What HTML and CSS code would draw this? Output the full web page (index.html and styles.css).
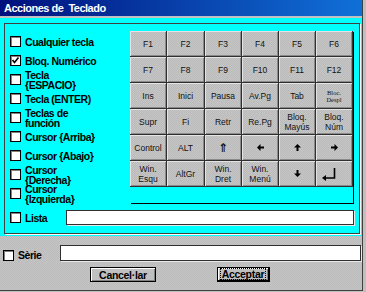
FILE: index.html
```html
<!DOCTYPE html>
<html lang="ca">
  <head>
    <meta charset="UTF-8" />
    <title>Acciones de Teclado</title>
    <link rel="stylesheet" href="styles.css">
  </head>
  <body>
    <div class="window">
      <!-- barra de títol -->
      <div class="titlebar">Acciones de&nbsp; Teclado</div>

      <!-- panell cian -->
      <div class="panel">
        <div class="group">
          <div class="top">
            <div class="checks">
              <div class="check-row"><span class="box"></span><span class="label">Cualquier tecla</span></div>
              <div class="check-row">
                <span class="box">
                  <svg width="9" height="9" viewBox="0 0 9 9"><path d="M1.5 4 L3.5 6.5 L7.5 1.5" fill="none" stroke="#000" stroke-width="1.6"/></svg>
                </span>
                <span class="label">Bloq. Numérico</span>
              </div>
              <div class="check-row"><span class="box"></span><span class="label">Tecla<br>{ESPACIO}</span></div>
              <div class="check-row"><span class="box"></span><span class="label">Tecla (ENTER)</span></div>
              <div class="check-row"><span class="box"></span><span class="label">Teclas de<br>función</span></div>
              <div class="check-row"><span class="box"></span><span class="label">Cursor {Arriba}</span></div>
              <div class="check-row"><span class="box"></span><span class="label">Cursor {Abajo}</span></div>
              <div class="check-row"><span class="box"></span><span class="label">Cursor<br>{Derecha}</span></div>
              <div class="check-row"><span class="box"></span><span class="label">Cursor<br>{Izquierda}</span></div>
            </div>

            <div class="keys">
              <div class="key">F1</div>
              <div class="key">F2</div>
              <div class="key">F3</div>
              <div class="key">F4</div>
              <div class="key">F5</div>
              <div class="key">F6</div>

              <div class="key">F7</div>
              <div class="key">F8</div>
              <div class="key">F9</div>
              <div class="key">F10</div>
              <div class="key">F11</div>
              <div class="key">F12</div>

              <div class="key">Ins</div>
              <div class="key">Inici</div>
              <div class="key">Pausa</div>
              <div class="key">Av.Pg</div>
              <div class="key">Tab</div>
              <div class="key tiny">Bloc.<br>Despl</div>

              <div class="key">Supr</div>
              <div class="key">Fi</div>
              <div class="key">Retr</div>
              <div class="key">Re.Pg</div>
              <div class="key">Bloq.<br>Mayús</div>
              <div class="key">Bloq.<br>Núm</div>

              <div class="key">Control</div>
              <div class="key">ALT</div>
              <div class="key shift">⇑</div>
              <div class="key">
                <svg width="7" height="7" viewBox="0 0 7 7"><path d="M0 3.5 L3.5 0 L3.5 2.5 L7 2.5 L7 4.5 L3.5 4.5 L3.5 7 Z"/></svg>
              </div>
              <div class="key">
                <svg width="7" height="7" viewBox="0 0 7 7"><path d="M3.5 0 L7 3.5 L4.5 3.5 L4.5 7 L2.5 7 L2.5 3.5 L0 3.5 Z"/></svg>
              </div>
              <div class="key">
                <svg width="7" height="7" viewBox="0 0 7 7"><path d="M7 3.5 L3.5 0 L3.5 2.5 L0 2.5 L0 4.5 L3.5 4.5 L3.5 7 Z"/></svg>
              </div>

              <div class="key">Win.<br>Esqu</div>
              <div class="key">AltGr</div>
              <div class="key">Win.<br>Dret</div>
              <div class="key">Win.<br>Menú</div>
              <div class="key">
                <svg width="7" height="7" viewBox="0 0 7 7"><path d="M3.5 7 L7 3.5 L4.5 3.5 L4.5 0 L2.5 0 L2.5 3.5 L0 3.5 Z"/></svg>
              </div>
              <div class="key">
                <svg class="enter" width="14" height="13" viewBox="0 0 14 13"><path d="M12.5 0 V10 H4" fill="none" stroke="#000" stroke-width="1.6"/><path d="M0 10 L4 7 L4 13 Z"/></svg>
              </div>
            </div>
          </div>

          <div class="lista-row">
            <span class="box"></span><span class="label lista-label">Lista</span>
            <div class="field lista-field"></div>
          </div>
        </div>
      </div>

      <!-- part inferior -->
      <div class="serie-row">
        <span class="box"></span><span class="label serie-label">Sèrie</span>
        <div class="field serie-field"></div>
      </div>

      <div class="buttons">
        <div class="btn cancel">Cancel·lar</div>
        <div class="btn accept"><span class="focus">Acceptar</span></div>
      </div>
    </div>
  </body>
</html>
```

FILE: styles.css
```css
body {
  margin: 0;
  font-family: "Liberation Sans", Arial, sans-serif;
  background: #c0c0c0;
}

.window {
  width: 362px;
  height: 290px;
  border-right: 1px solid #404040;
  border-bottom: 1px solid #404040;
  background-color: #c0c0c0;
  background-image: repeating-conic-gradient(#c5c5c5 0 25%, #bbbbbb 0 50%);
  background-size: 2px 2px;
  overflow: hidden;
}

/* barra de títol */
.titlebar {
  height: 16px;
  line-height: 16px;
  padding-left: 4px;
  background: linear-gradient(to right, #00107c, #1070d8);
  color: #fff;
  font-size: 11px;
  font-weight: bold;
  letter-spacing: -0.5px;
}

/* panell cian */
.panel {
  margin-top: 2px;
  height: 218px;
  background: #00ffff;
  padding: 5px 0 0 4px;
  box-sizing: border-box;
}

.group {
  width: 356px;
  height: 211px;
  box-sizing: border-box;
  border: 1px solid #404040;
  box-shadow: 1px 1px 0 #ffffff;
  padding: 7px 0 0 5px;
}

.top {
  display: flex;
}

.checks {
  width: 120px;
  display: flex;
  flex-direction: column;
  padding-top: 1px;
}

.check-row {
  height: 19px;
  display: flex;
  align-items: center;
}

.box {
  width: 11px;
  height: 11px;
  box-sizing: border-box;
  flex: none;
  background: #fff;
  border: 1px solid #000;
  box-shadow: inset 1px 1px 0 #808080;
  display: flex;
  align-items: center;
  justify-content: center;
}

.label {
  margin-left: 4px;
  font-size: 10.5px;
  font-weight: bold;
  letter-spacing: -0.45px;
  line-height: 10px;
  color: #000;
}

/* teclat */
.keys {
  display: grid;
  grid-template-columns: 37px 38px 37px 37px 37px 37px;
  grid-template-rows: repeat(6, 26px);
  box-shadow: 1px 1px 0 #000;
}

.key {
  display: flex;
  align-items: center;
  justify-content: center;
  text-align: center;
  font-size: 8.5px;
  line-height: 10px;
  color: #111;
  background-color: #c0c0c0;
  background-image: repeating-conic-gradient(#c6c6c6 0 25%, #bababa 0 50%);
  background-size: 2px 2px;
  border-right: 1px solid #303030;
  border-bottom: 1px solid #303030;
  box-shadow: inset 1px 1px 0 #e4e4e4, inset -1px -1px 0 #8a8a8a;
}

.key.tiny {
  font-size: 6.5px;
  line-height: 7px;
  font-family: "Liberation Serif", serif;
}

.key.shift {
  font-family: "DejaVu Sans", sans-serif;
  font-size: 12px;
  font-weight: bold;
}

.enter {
  margin-right: 10px;
  margin-top: 2px;
}

/* fila Lista */
.lista-row {
  margin-top: 7px;
  height: 15px;
  display: flex;
  align-items: center;
}

.lista-label {
  width: 41px;
}

.field {
  height: 15px;
  box-sizing: border-box;
  background: #fff;
  border: 1px solid #303030;
  box-shadow: 1px 1px 0 #e8e8e8;
}

.lista-field {
  width: 288px;
}

/* fila Sèrie */
.serie-row {
  margin-top: 9px;
  height: 16px;
  padding-left: 3px;
  display: flex;
  align-items: center;
}

.serie-row .box {
  margin-top: 4px;
}

.serie-label {
  width: 42px;
  margin-top: 3px;
}

.serie-field {
  width: 301px;
  height: 16px;
}

/* botons */
.buttons {
  margin-top: 6px;
  padding-left: 90px;
  display: flex;
  gap: 61px;
}

.btn {
  height: 15px;
  box-sizing: border-box;
  display: flex;
  align-items: center;
  justify-content: center;
  font-size: 10.5px;
  font-weight: bold;
  letter-spacing: -0.3px;
  color: #000;
  background: #c0c0c0;
  border: 1px solid #000;
  box-shadow: inset 1px 1px 0 #fff, inset -1px -1px 0 #808080;
}

.cancel {
  width: 66px;
}

.accept {
  width: 53px;
  border-width: 1px 2px 2px 1px;
}

.focus {
  outline: 1px dotted #000;
  padding: 0 1px;
  line-height: 10px;
}
```
